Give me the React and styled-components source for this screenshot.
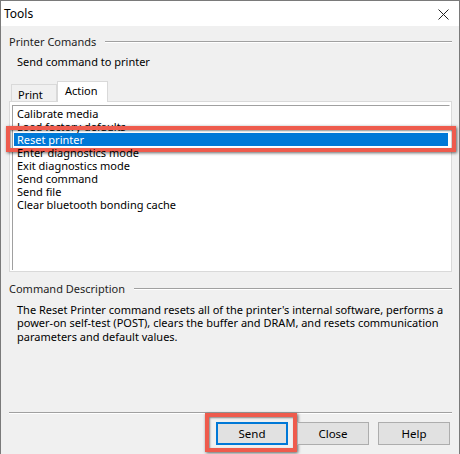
import React from 'react';
import styled, { createGlobalStyle } from 'styled-components';

const GlobalStyle = createGlobalStyle`
  html, body {
    margin: 0;
    padding: 0;
    background: #ffffff;
  }
  body {
    font-family: "Noto Sans", "Liberation Sans", sans-serif;
    font-size: 11px;
    color: #000;
  }
`;

const commands = [
  'Calibrate media',
  'Load factory defaults',
  'Reset printer',
  'Enter diagnostics mode',
  'Exit diagnostics mode',
  'Send command',
  'Send file',
  'Clear bluetooth bonding cache',
];

const descriptionLines = [
  "The Reset Printer command resets all of the printer's internal software, performs a",
  'power-on self-test (POST), clears the buffer and DRAM, and resets communication',
  'parameters and default values.',
];

function CloseIcon() {
  return (
    <svg width="11" height="11" viewBox="0 0 11 11">
      <path d="M0.5 0.5 L10.5 10.5 M10.5 0.5 L0.5 10.5" stroke="#222" strokeWidth="1" fill="none" />
    </svg>
  );
}

function App() {
  const selected = 'Reset printer';

  return (
    <>
      <GlobalStyle />
      <Window>
        <TitleBar>
          <Title>Tools</Title>
          <CloseButton>
            <CloseIcon />
          </CloseButton>
        </TitleBar>

        <Body>
          <GroupHeader>Printer Comands</GroupHeader>
          <Subtitle>Send command to printer</Subtitle>

          <TabStrip>
            <Tab>Print</Tab>
            <Tab $active>Action</Tab>
          </TabStrip>
          <TabPanel>
            <ListBox>
              {commands.map(cmd => (
                <ListItem key={cmd} $selected={cmd === selected}>
                  {cmd}
                </ListItem>
              ))}
            </ListBox>
          </TabPanel>

          <GroupHeader $spaced>Command Description</GroupHeader>
          <Description>
            {descriptionLines.map(line => (
              <DescLine key={line}>{line}</DescLine>
            ))}
          </Description>

          <Footer>
            <Button $focused $marked>Send</Button>
            <Button>Close</Button>
            <Button>Help</Button>
          </Footer>
        </Body>
      </Window>
    </>
  );
}

export default App;

const Window = styled.div`
  height: 100vh;
  box-sizing: border-box;
  display: flex;
  flex-direction: column;
  border-top: 1px solid #7a7a7a;
  border-left: 1px solid #7a7a7a;
  border-right: 1px solid #7a7a7a;
  background: #f0f0f0;
  overflow: hidden;
`;

const TitleBar = styled.div`
  height: 25px;
  flex-shrink: 0;
  background: #ffffff;
  display: flex;
  align-items: center;
  justify-content: space-between;
  padding: 0 10px 0 3px;
`;

const Title = styled.div`
  font-size: 12px;
  line-height: 16px;
`;

const CloseButton = styled.div`
  display: flex;
  align-items: center;
  padding-top: 1px;
`;

const Body = styled.div`
  flex: 1;
  display: flex;
  flex-direction: column;
  padding: 8px 7px 0 8px;
`;

const GroupHeader = styled.div`
  display: flex;
  align-items: center;
  gap: 9px;
  line-height: 16px;
  color: #1e1e1e;
  margin-top: ${p => (p.$spaced ? '9px' : '0')};
  &::after {
    content: '';
    flex: 1;
    height: 1px;
    background: #a0a0a0;
    border-bottom: 1px solid #ffffff;
    margin-top: -1px;
  }
`;

const Subtitle = styled.div`
  margin-top: 4px;
  padding-left: 8px;
  line-height: 16px;
`;

const TabStrip = styled.div`
  margin-top: 11px;
  height: 20px;
  display: flex;
  align-items: flex-end;
  padding-left: 2px;
`;

const Tab = styled.div`
  box-sizing: border-box;
  height: ${p => (p.$active ? '21px' : '17px')};
  padding: ${p => (p.$active ? '1px 8px 0 7px' : '2px 6px 0 6px')};
  background: ${p => (p.$active ? '#ffffff' : '#f0f0f0')};
  border: 1px solid #d9d9d9;
  border-bottom: none;
  margin-bottom: ${p => (p.$active ? '-1px' : '0')};
  width: ${p => (p.$active ? '51px' : '46px')};
  line-height: 16px;
  position: relative;
  z-index: ${p => (p.$active ? 1 : 0)};
  & + & {
    border-left: ${p => (p.$active ? '1px solid #d9d9d9' : 'none')};
  }
`;

const TabPanel = styled.div`
  box-sizing: border-box;
  height: 171px;
  display: flex;
  background: #ffffff;
  border: 1px solid #d9d9d9;
  padding: 3px 1px 1px 2px;
`;

const ListBox = styled.div`
  flex: 1;
  border-top: 1px solid #a0a0a0;
  border-left: 1px solid #a0a0a0;
  border-right: 1px solid #ffffff;
  padding: 1px 0 0 1px;
`;

const ListItem = styled.div`
  position: relative;
  height: 13px;
  line-height: 13px;
  padding-left: 3px;
  margin-right: 1px;
  white-space: nowrap;
  background: ${p => (p.$selected ? '#0078d7' : 'transparent')};
  color: ${p => (p.$selected ? '#ffffff' : '#000000')};

  ${p =>
    p.$selected &&
    `
    &::after {
      content: '';
      position: absolute;
      top: -7px;
      bottom: -6px;
      left: -8px;
      right: -8px;
      border: 4px solid #ee5b4d;
      box-shadow: 1px 1px 3px rgba(0, 0, 0, 0.6), inset 1px 1px 2px rgba(0, 0, 0, 0.45);
      pointer-events: none;
    }
  `}
`;

const Description = styled.div`
  flex: 1;
  margin-top: 6px;
  padding-left: 8px;
  line-height: 13.4px;
`;

const DescLine = styled.div`
  white-space: nowrap;
`;

const Footer = styled.div`
  display: flex;
  justify-content: flex-end;
  gap: 9px;
  padding: 9px 2px 9px 0;
  border-top: 1px solid #a0a0a0;
  box-shadow: inset 0 1px 0 #ffffff;
`;

const Button = styled.div`
  position: relative;
  box-sizing: border-box;
  width: 72px;
  height: 23px;
  display: flex;
  align-items: center;
  justify-content: center;
  background: #e1e1e1;
  border: ${p => (p.$focused ? '2px solid #0078d7' : '1px solid #adadad')};
  line-height: 16px;
  font-size: 11.5px;

  ${p =>
    p.$marked &&
    `
    &::after {
      content: '';
      position: absolute;
      top: -11px;
      bottom: -9px;
      left: -13px;
      right: -11px;
      border: 4px solid #ee5b4d;
      box-shadow: 1px 1px 3px rgba(0, 0, 0, 0.6), inset 1px 1px 2px rgba(0, 0, 0, 0.45);
      pointer-events: none;
    }
  `}
`;
